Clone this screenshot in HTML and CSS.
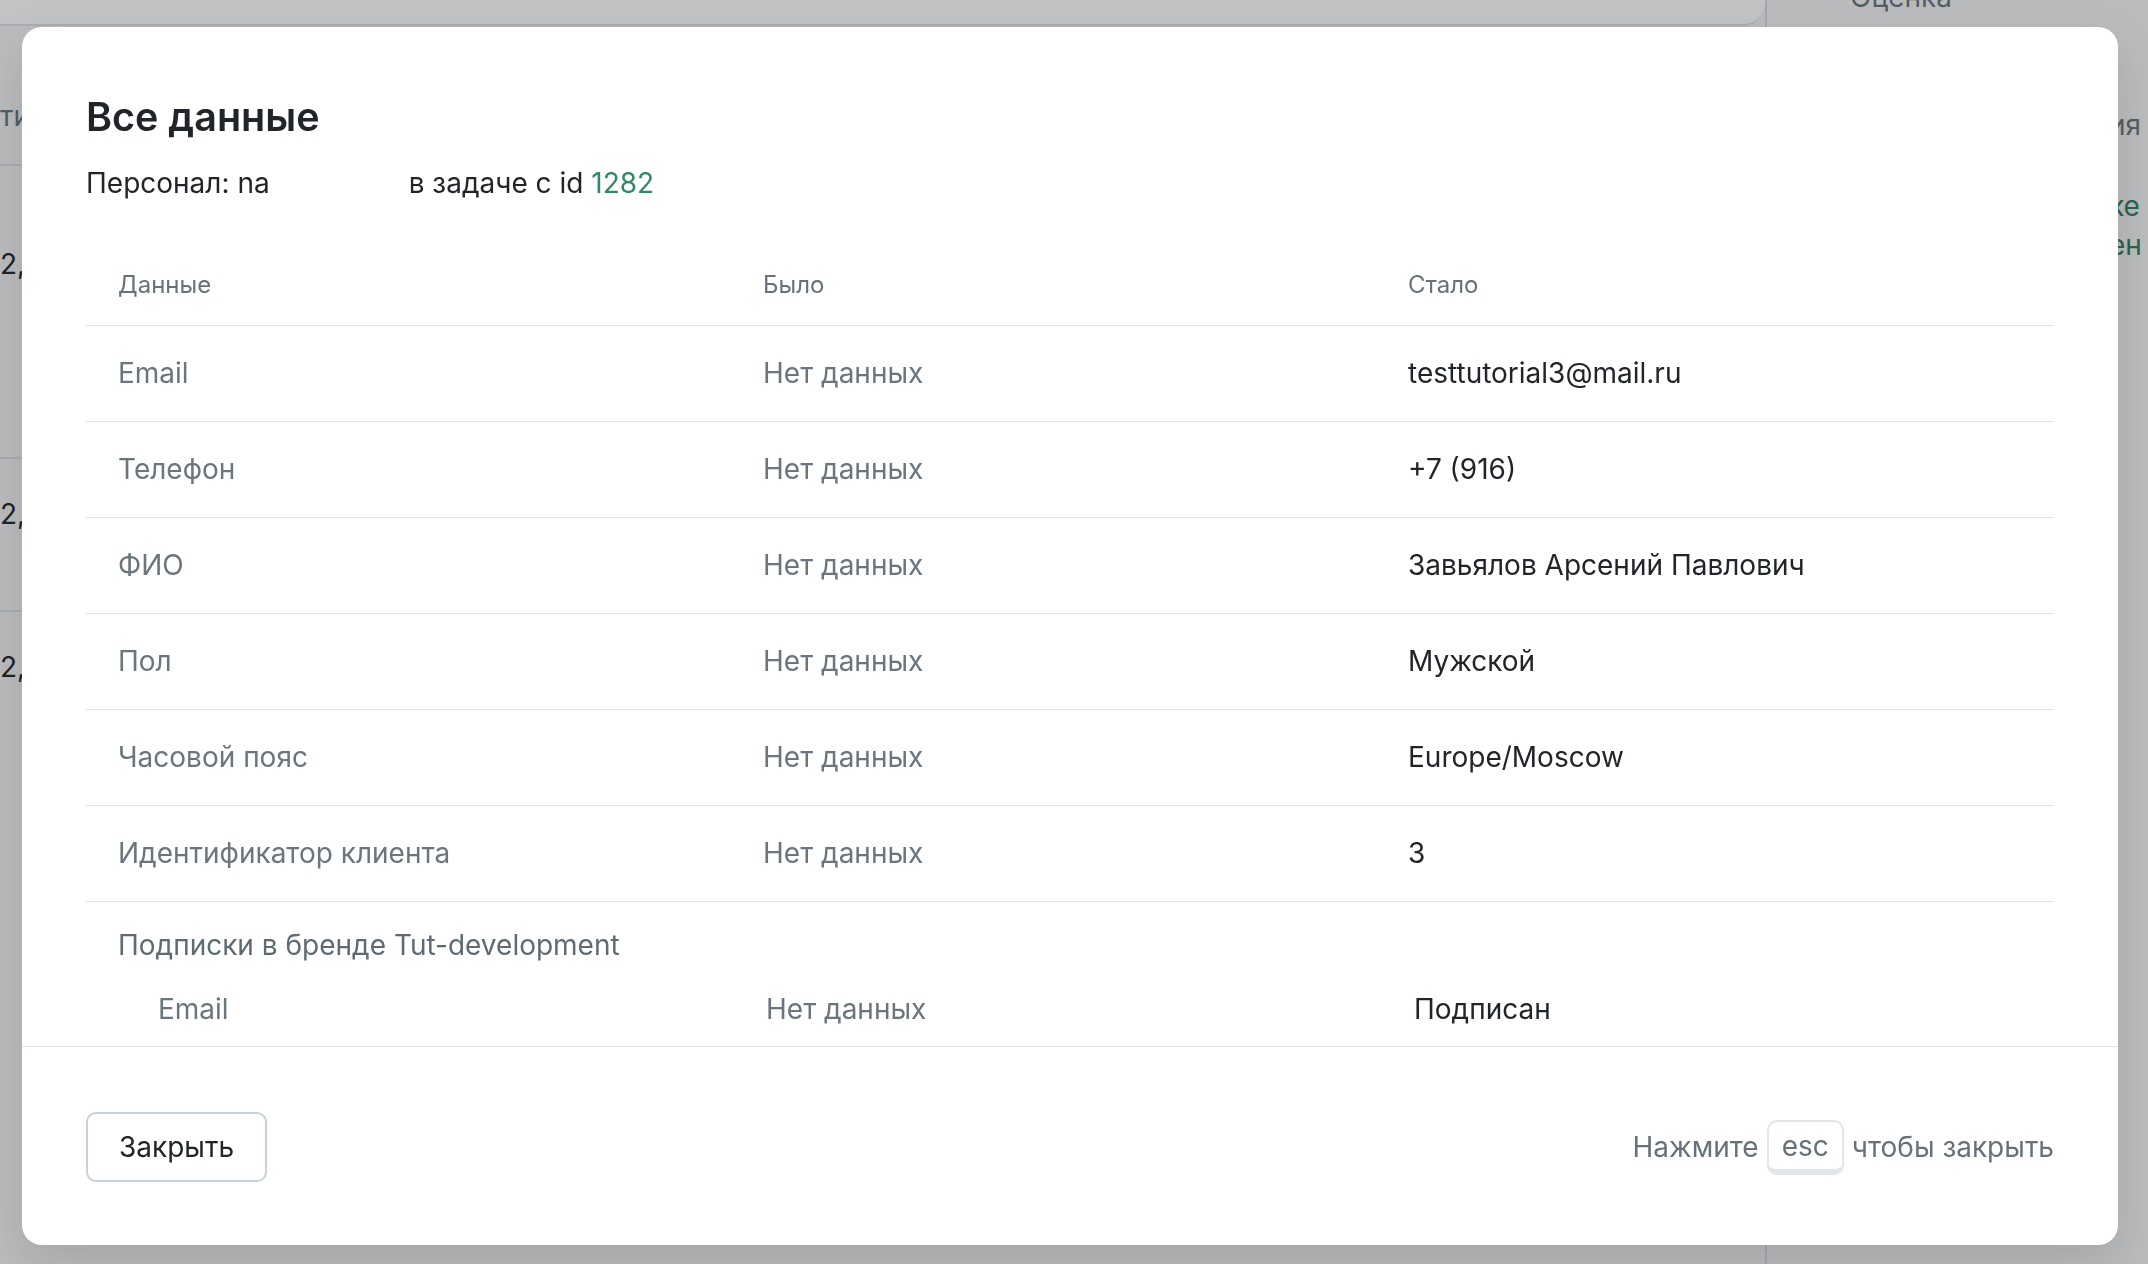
FILE: index.html
```html
<!DOCTYPE html>
<html lang="ru">
<head>
  <meta charset="UTF-8" />
  <meta name="viewport" content="width=device-width, initial-scale=1" />
  <title>Все данные</title>
  <link rel="stylesheet" href="styles.css">
</head>
<body>

  <!-- Page behind the modal -->
  <div class="page">
    <div class="page-main">
      <div class="page-top"></div>
      <div class="page-rows">
        <div class="page-cell cell-head">ти</div>
        <div class="page-cell cell-row">2,</div>
        <div class="page-cell cell-row short">2,</div>
        <div class="page-cell cell-row short last">2,</div>
      </div>
    </div>
    <aside class="page-side">
      <div class="side-title">Оценка</div>
      <div class="side-head">ия</div>
      <div class="side-link">ке<br>ен</div>
    </aside>
  </div>

  <div class="overlay"></div>

  <!-- Modal -->
  <div class="modal" role="dialog">
    <div class="modal-body">
      <h2 class="modal-title">Все данные</h2>
      <p class="modal-sub">
        Персонал: na<span class="hidden-name"></span>в задаче с id <a href="#" class="task-link">1282</a>
      </p>

      <div class="data-table">
        <div class="data-row data-head">
          <div class="cell">Данные</div>
          <div class="cell">Было</div>
          <div class="cell">Стало</div>
        </div>
        <div class="data-row">
          <div class="cell label">Email</div>
          <div class="cell label">Нет данных</div>
          <div class="cell value">testtutorial3@mail.ru</div>
        </div>
        <div class="data-row">
          <div class="cell label">Телефон</div>
          <div class="cell label">Нет данных</div>
          <div class="cell value">+7 (916)</div>
        </div>
        <div class="data-row">
          <div class="cell label">ФИО</div>
          <div class="cell label">Нет данных</div>
          <div class="cell value">Завьялов Арсений Павлович</div>
        </div>
        <div class="data-row">
          <div class="cell label">Пол</div>
          <div class="cell label">Нет данных</div>
          <div class="cell value">Мужской</div>
        </div>
        <div class="data-row">
          <div class="cell label">Часовой пояс</div>
          <div class="cell label">Нет данных</div>
          <div class="cell value">Europe/Moscow</div>
        </div>
        <div class="data-row">
          <div class="cell label">Идентификатор клиента</div>
          <div class="cell label">Нет данных</div>
          <div class="cell value">3</div>
        </div>

        <!-- Subscriptions group -->
        <div class="data-group">
          <div class="group-title">Подписки в бренде Tut-development</div>
          <div class="sub-row">
            <div class="cell label">Email</div>
            <div class="cell label">Нет данных</div>
            <div class="cell value">Подписан</div>
          </div>
          <div class="sub-row">
            <div class="cell label">SMS</div>
            <div class="cell label">Нет данных</div>
            <div class="cell value">Подписан</div>
          </div>
        </div>
      </div>
    </div>

    <div class="modal-footer">
      <button class="btn-close" type="button">Закрыть</button>
      <div class="esc-hint">
        Нажмите <kbd class="kbd">esc</kbd> чтобы закрыть
      </div>
    </div>
  </div>

</body>
</html>
```

FILE: styles.css
```css
html, body {
  margin: 0;
  padding: 0;
  height: 100%;
}

body {
  font-family: Inter, "Noto Sans", sans-serif;
  background: #f4f5f6;
  color: #212529;
  overflow: hidden;
}

/* Page behind the modal */
.page {
  display: flex;
  height: 100%;
}

.page-main {
  width: 1765px;
  flex-shrink: 0;
  border-right: 2px solid #d9dde1;
}

.page-top {
  height: 24px;
  background: #fff;
  border-bottom: 2px solid #dde1e5;
  border-bottom-right-radius: 22px;
}

.page-rows {
  font-size: 28px;
  line-height: 40px;
  color: #212529;
}

.page-cell {
  width: 22px;
  white-space: nowrap;
  box-sizing: border-box;
  border-bottom: 2px solid #dde1e5;
}

.cell-head {
  height: 140px;
  padding-top: 70px;
  color: #6a757c;
}

.cell-row {
  height: 293px;
  padding-top: 78px;
}

.cell-row.short {
  height: 153px;
  padding-top: 35px;
}

.cell-row.last {
  border-bottom: none;
}

.page-side {
  flex: 1;
  font-size: 28px;
  line-height: 40px;
  white-space: nowrap;
}

.side-title {
  margin-top: -23px;
  padding-left: 83px;
  color: #6a757c;
}

.side-head {
  margin-top: 88px;
  padding-left: 342px;
  color: #6a757c;
}

.side-link {
  margin-top: 42px;
  padding-left: 342px;
  line-height: 39px;
  color: #2f7d5b;
}

.overlay {
  position: fixed;
  inset: 0;
  background: rgba(28, 33, 38, 0.27);
}

/* Modal */
.modal {
  position: fixed;
  left: 22px;
  top: 27px;
  width: 2096px;
  height: 1218px;
  background: #fff;
  border-radius: 20px;
  box-shadow: 0 20px 50px rgba(0, 0, 0, 0.12);
  display: flex;
  flex-direction: column;
  overflow: hidden;
}

.modal-body {
  flex: 1;
  overflow: hidden;
  padding: 62px 64px 0;
}

.modal-title {
  margin: 0;
  font-size: 39.5px;
  line-height: 56px;
  font-weight: 600;
  color: #212529;
}

.modal-sub {
  margin: 18px 0 0;
  font-size: 28px;
  line-height: 40px;
  color: #212529;
}

.hidden-name {
  display: inline-block;
  width: 139px;
}

.task-link {
  color: #2f8a5f;
  text-decoration: none;
}

/* Data table */
.data-table {
  margin-top: 38px;
}

.data-row {
  display: grid;
  grid-template-columns: 645px 645px 1fr;
  border-bottom: 1px solid #dee3e6;
}

.cell {
  padding: 0 32px;
  font-size: 28px;
  line-height: 40px;
}

.data-row .cell {
  padding-top: 27px;
  padding-bottom: 28px;
}

.data-head .cell {
  font-size: 24px;
  line-height: 32px;
  padding-top: 28px;
  padding-bottom: 24px;
  color: #66727a;
}

.label {
  color: #6a757c;
}

.value {
  color: #212529;
}

.data-group {
  padding-top: 23px;
}

.group-title {
  padding-left: 32px;
  font-size: 28px;
  line-height: 40px;
  color: #5f6b72;
}

.sub-row {
  display: grid;
  grid-template-columns: 648px 648px 1fr;
  padding: 24px 0;
}

.sub-row .cell:first-child {
  padding-left: 72px;
}

/* Footer */
.modal-footer {
  border-top: 1px solid #dee3e6;
  padding: 65px 64px 63px;
  display: flex;
  justify-content: space-between;
  align-items: center;
}

.btn-close {
  height: 70px;
  padding: 0 31px;
  font-family: inherit;
  font-size: 28px;
  color: #212529;
  background: #fff;
  border: 2px solid #c6d1da;
  border-radius: 10px;
  cursor: pointer;
}

.esc-hint {
  font-size: 28px;
  line-height: 40px;
  color: #66727a;
  display: flex;
  align-items: center;
  gap: 8px;
}

.kbd {
  font-family: inherit;
  font-size: 28px;
  line-height: 40px;
  color: #66727a;
  padding: 4px 13px 3px;
  border: 2px solid #e0e6ea;
  border-bottom-width: 6px;
  border-radius: 10px;
  background: #fff;
}
```
